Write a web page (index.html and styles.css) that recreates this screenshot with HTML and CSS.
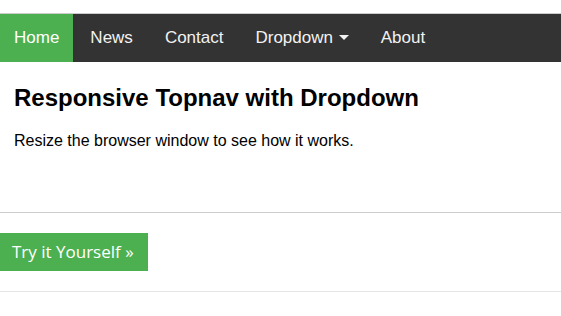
FILE: index.html
```html
<!DOCTYPE html>
<html lang="en">
<head>
    <meta charset="UTF-8">
    <meta name="viewport" content="width=device-width, initial-scale=1.0">
    <title>Responsive Topnav with Dropdown</title>
    <link rel="stylesheet" href="styles.css">
</head>
<body>
    <div class="frame">
        <nav class="topnav">
            <a href="#home" class="active">Home</a>
            <a href="#news">News</a>
            <a href="#contact">Contact</a>
            <a href="#" class="dropbtn">Dropdown <span class="caret"></span></a>
            <a href="#about">About</a>
        </nav>
        <div class="content">
            <h2>Responsive Topnav with Dropdown</h2>
            <p>Resize the browser window to see how it works.</p>
        </div>
    </div>
    <div class="try">
        <a href="#" class="try-btn">Try it Yourself &raquo;</a>
    </div>
</body>
</html>
```

FILE: styles.css
```css
/* CSS */
body {
    margin: 0;
    padding: 0;
    font-family: Arial, "Liberation Sans", sans-serif;
}

.frame {
    border-top: 1px solid #ccc;
    border-bottom: 1px solid #ccc;
    margin-top: 13px;
    height: 198px;
}

.topnav {
    display: flex;
    background: #333;
}

.topnav a {
    color: #f2f2f2;
    text-decoration: none;
    font-size: 17px;
    padding: 14px 16px;
    line-height: 20px;
}

.topnav a.active {
    background: #4caf50;
    color: white;
    padding: 14px;
}

.topnav a.active + a {
    padding-left: 17px;
}

.caret {
    display: inline-block;
    width: 0;
    height: 0;
    border-left: 5px solid transparent;
    border-right: 5px solid transparent;
    border-top: 5px solid #f2f2f2;
    vertical-align: middle;
    margin-left: 1px;
    position: relative;
    top: -1px;
}

.content {
    padding: 0 14px;
}

.content h2 {
    font-size: 24px;
    line-height: 28px;
    margin: 22px 0 20px;
}

.content p {
    font-size: 16px;
    line-height: 18px;
    margin: 0;
}

.try {
    padding: 20px 0;
    border-bottom: 1px solid #e5e5e5;
}

.try-btn {
    display: inline-block;
    background: #4caf50;
    color: white;
    text-decoration: none;
    font-family: "Open Sans", sans-serif;
    font-size: 17px;
    padding: 8px 14px 8px 12px;
    line-height: 22px;
}
```
